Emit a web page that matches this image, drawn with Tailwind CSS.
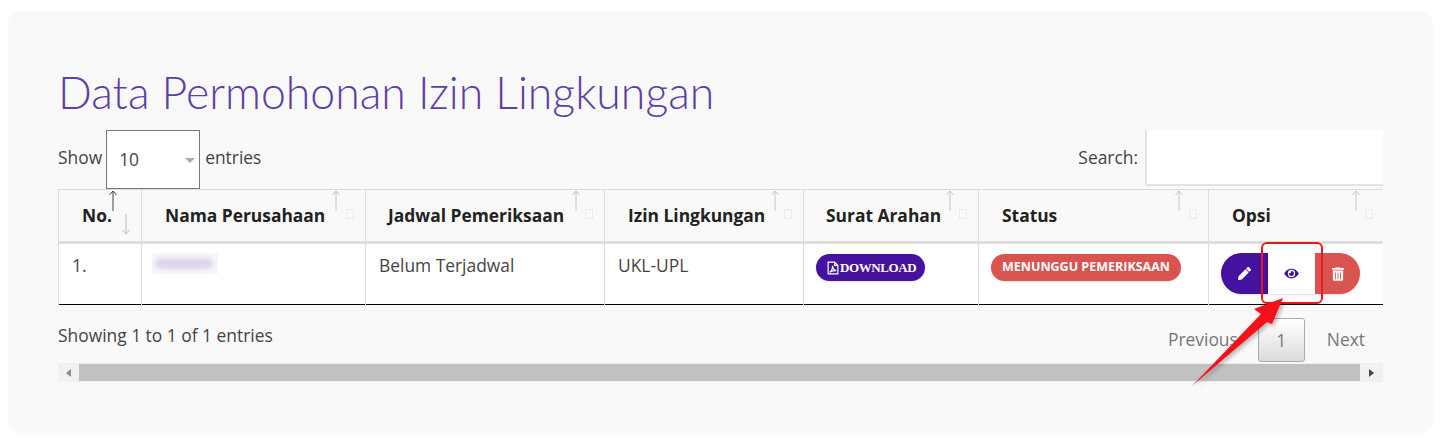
<!DOCTYPE html>
<html lang="id">
<head>
  <meta charset="UTF-8">
  <title>Data Permohonan Izin Lingkungan</title>
  <script src="https://cdn.jsdelivr.net/npm/@tailwindcss/browser@4"></script>
</head>
<body class="bg-white font-['Open_Sans',sans-serif] text-[17.4px] text-[#444]">

<div class="relative w-[1443px] h-[443px] overflow-hidden">
  <div class="ml-2 mt-[11px] w-[1425px] h-[422px] bg-[#f9f9f9] rounded-xl px-[50px] pt-[48px]">
    <h1 class="font-['Lato',sans-serif] font-light text-[44.6px] leading-[65px] text-[#5f3ea6] h-[71px]">Data Permohonan Izin Lingkungan</h1>

    <!-- length + search -->
    <div class="flex justify-between h-[59px]">
      <div class="flex items-start">
        <span class="leading-[54px] mr-1">Show</span>
        <div class="relative w-[94px] h-[59px] bg-white border border-[#777] pl-3 leading-[56px]">
          10
          <span class="absolute right-[4px] top-[27px] border-x-[5px] border-t-[5px] border-x-transparent border-t-[#aaa]"></span>
        </div>
        <span class="leading-[54px] ml-[5px]">entries</span>
      </div>
      <div class="flex items-start">
        <span class="leading-[54px] mr-[7px]">Search:</span>
        <div class="w-[238px] h-[56px] bg-white border-l-2 border-b-2 border-[#e4e4e4]"></div>
      </div>
    </div>

    <!-- table -->
    <div class="w-[1325px] overflow-hidden">
      <table class="w-[1325px] table-fixed border-collapse">
        <colgroup>
          <col class="w-[83px]"><col class="w-[224px]"><col class="w-[239px]"><col class="w-[199px]"><col class="w-[175px]"><col class="w-[230px]"><col class="w-[175px]">
        </colgroup>
        <thead>
          <tr class="h-[53px] text-left font-bold text-[#222]">
            <th class="relative border border-b-3 border-[#ddd] pl-[23px]">No.
              <svg class="absolute left-[49px] top-0 w-[10px] h-[22px]" viewBox="0 0 10 22" fill="none" stroke="#444" stroke-width="1"><path d="M5 21V1M1.500 5L5 1l3.500 4"/></svg>
              <svg class="absolute left-[62px] top-[23px] w-[10px] h-[22px]" viewBox="0 0 10 22" fill="none" stroke="#bbb" stroke-width="1"><path d="M5 1v20M1.500 17L5 21l3.500-4"/></svg>
            </th>
            <th class="relative border border-b-3 border-[#ddd] pl-[23px]">Nama Perusahaan
              <svg class="absolute right-[24px] top-0 w-[10px] h-[22px]" viewBox="0 0 10 22" fill="none" stroke="#bcc6d4" stroke-width="1"><path d="M5 21V1M1.500 5L5 1l3.500 4"/></svg>
              <span class="absolute right-[11px] top-[19px] w-2 h-[10px] border border-[#ececec]"></span>
            </th>
            <th class="relative border border-b-3 border-[#ddd] pl-[22px]">Jadwal Pemeriksaan
              <svg class="absolute right-[23px] top-0 w-[10px] h-[22px]" viewBox="0 0 10 22" fill="none" stroke="#bcc6d4" stroke-width="1"><path d="M5 21V1M1.500 5L5 1l3.500 4"/></svg>
              <span class="absolute right-[11px] top-[19px] w-2 h-[10px] border border-[#ececec]"></span>
            </th>
            <th class="relative border border-b-3 border-[#ddd] pl-[23px]">Izin Lingkungan
              <svg class="absolute right-[23px] top-0 w-[10px] h-[22px]" viewBox="0 0 10 22" fill="none" stroke="#bcc6d4" stroke-width="1"><path d="M5 21V1M1.500 5L5 1l3.500 4"/></svg>
              <span class="absolute right-[11px] top-[19px] w-2 h-[10px] border border-[#ececec]"></span>
            </th>
            <th class="relative border border-b-3 border-[#ddd] pl-[22px]">Surat Arahan
              <svg class="absolute right-[23px] top-0 w-[10px] h-[22px]" viewBox="0 0 10 22" fill="none" stroke="#c8c0cc" stroke-width="1"><path d="M5 21V1M1.500 5L5 1l3.500 4"/></svg>
              <span class="absolute right-[11px] top-[19px] w-2 h-[10px] border border-[#ececec]"></span>
            </th>
            <th class="relative border border-b-3 border-[#ddd] pl-[23px]">Status
              <svg class="absolute right-[24px] top-0 w-[10px] h-[22px]" viewBox="0 0 10 22" fill="none" stroke="#c8c0cc" stroke-width="1"><path d="M5 21V1M1.500 5L5 1l3.500 4"/></svg>
              <span class="absolute right-[11px] top-[19px] w-2 h-[10px] border border-[#ececec]"></span>
            </th>
            <th class="relative border-t border-b-3 border-l border-[#ddd] pl-[23px]">Opsi
              <svg class="absolute right-[23px] top-0 w-[10px] h-[22px]" viewBox="0 0 10 22" fill="none" stroke="#c8c8cc" stroke-width="1"><path d="M5 21V1M1.500 5L5 1l3.500 4"/></svg>
              <span class="absolute right-[11px] top-[19px] w-2 h-[10px] border border-[#ececec]"></span>
            </th>
          </tr>
        </thead>
        <tbody>
          <tr class="h-[62px] bg-white border-b border-b-black align-top">
            <td class="border-x border-[#ddd] pl-[13px] pt-2">1.</td>
            <td class="border-x border-[#ddd] pl-[10px] pt-[9px]">
              <div class="w-[66px] h-[21px] bg-[#f8f6fb] pt-[5px] pl-[3px]"><div class="w-[58px] h-[11px] rounded-full bg-[#dcd4ea] blur-[2.5px]"></div></div>
            </td>
            <td class="border-x border-[#ddd] pl-[13px] pt-2">Belum Terjadwal</td>
            <td class="border-x border-[#ddd] pl-[13px] pt-2">UKL-UPL</td>
            <td class="border-x border-[#ddd] pl-[12px] pt-[10px]">
              <span class="flex items-center w-[109px] h-[27px] rounded-full bg-[#44129f] text-white pl-[11px] font-['Liberation_Serif',serif] font-bold text-[13px] tracking-[-0.4px] shadow-sm">
                <svg class="w-[12px] h-[14px] mr-px shrink-0" viewBox="0 0 11 13" fill="none" stroke="#fff" stroke-width="1.100"><path d="M1 1h6l3 3v8H1zM7 1v3h3M2.500 10.500C4 9.500 5.500 6.500 5 4.500c.3 2 1.500 4 3.500 4.500-2-.3-4.500.3-6 1.500z"/></svg>
                DOWNLOAD
              </span>
            </td>
            <td class="border-x border-[#ddd] pl-[12px] pt-[10px]">
              <span class="flex items-center justify-center w-[190px] h-[27px] rounded-full bg-[#d9534f] text-white font-bold text-[12.5px] shadow-sm">MENUNGGU PEMERIKSAAN</span>
            </td>
            <td class="border-l border-[#ddd] pl-[12px] pt-[9px]">
              <div class="flex h-[41px] w-[139px]">
                <span class="flex items-center justify-center w-[47px] rounded-l-full bg-[#44129f] shadow-sm">
                  <svg class="w-[13px] h-[13px]" viewBox="0 0 512 512" fill="#fff"><path d="M497.9 142.1l-46.1 46.1c-4.7 4.7-12.3 4.7-17 0l-111-111c-4.7-4.7-4.7-12.3 0-17l46.1-46.1c18.7-18.7 49.1-18.700 67.900 0l60.100 60.100c18.800 18.700 18.800 49.100 0 67.900zM284.200 99.800L21.600 362.400.4 483.900c-2.900 16.400 11.400 30.600 27.800 27.800l121.500-21.300 262.600-262.600c4.700-4.700 4.700-12.300 0-17l-111-111c-4.800-4.700-12.400-4.700-17.100 0z"/></svg>
                </span>
                <span class="flex items-center justify-center w-[47px] bg-white shadow-sm">
                  <svg class="w-[15px] h-[13px]" viewBox="0 0 576 512" fill="#44129f"><path d="M572.52 241.4C518.29 135.59 410.93 64 288 64S57.68 135.64 3.48 241.41a32.35 32.35 0 0 0 0 29.19C57.71 376.41 165.07 448 288 448s230.32-71.64 284.52-177.41a32.35 32.35 0 0 0 0-29.19zM288 400a144 144 0 1 1 144-144 143.93 143.93 0 0 1-144 144zm0-240a95.31 95.31 0 0 0-25.31 3.79 47.85 47.85 0 0 1-66.9 66.9A95.78 95.78 0 1 0 288 160z"/></svg>
                </span>
                <span class="flex items-center justify-center w-[45px] rounded-r-full bg-[#d9534f] shadow-sm">
                  <svg class="w-[12px] h-[14px]" viewBox="0 0 448 512" fill="#fff"><path d="M32 464a48 48 0 0 0 48 48h288a48 48 0 0 0 48-48V128H32zm272-256a16 16 0 0 1 32 0v224a16 16 0 0 1-32 0zm-96 0a16 16 0 0 1 32 0v224a16 16 0 0 1-32 0zm-96 0a16 16 0 0 1 32 0v224a16 16 0 0 1-32 0zM432 32H312l-3.590-7.170A24 24 0 0 0 296.760 16H151.200a23.720 23.720 0 0 0-21.400 8.830L128 32H16A16 16 0 0 0 0 48v32a16 16 0 0 0 16 16h416a16 16 0 0 0 16-16V48a16 16 0 0 0-16-16z"/></svg>
                </span>
              </div>
            </td>
          </tr>
        </tbody>
      </table>
    </div>

    <!-- info + pagination -->
    <div class="flex justify-between h-[58px] pt-[13px]">
      <span class="leading-[36px] -mt-[1px]">Showing 1 to 1 of 1 entries</span>
      <div class="flex items-start text-[#777] pr-[18px]">
        <span class="leading-[42px] mr-5">Previous</span>
        <span class="w-[47px] h-[44px] border border-[#aaa] rounded-[3px] bg-linear-to-b from-white to-[#dcdcdc] text-center leading-[42px]">1</span>
        <span class="leading-[42px] ml-[22px]">Next</span>
      </div>
    </div>

    <!-- horizontal scrollbar -->
    <div class="flex w-[1325px] h-[19px] bg-[#f1f1f1] items-center">
      <span class="flex justify-center w-[21px]"><span class="border-y-[4px] border-r-[5px] border-y-transparent border-r-[#8a8a8a]"></span></span>
      <div class="w-[1281px] h-[17px] bg-[#c1c1c1]"></div>
      <span class="flex justify-center w-[23px]"><span class="border-y-[4px] border-l-[5px] border-y-transparent border-l-[#444]"></span></span>
    </div>
  </div>

  <!-- annotation over the screenshot -->
  <div class="absolute left-[1261px] top-[242px] w-[62px] h-[62px] border-2 border-[#f0141e] rounded-md"></div>
  <svg class="absolute left-0 top-0 w-[1443px] h-[443px] pointer-events-none drop-shadow-[2px_2px_2px_rgba(0,0,0,0.3)]" viewBox="0 0 1443 443">
    <polygon points="1283,298 1254,309 1261,314 1192,386 1267,322 1272,324" fill="#f5101a"/>
  </svg>
</div>

</body>
</html>
